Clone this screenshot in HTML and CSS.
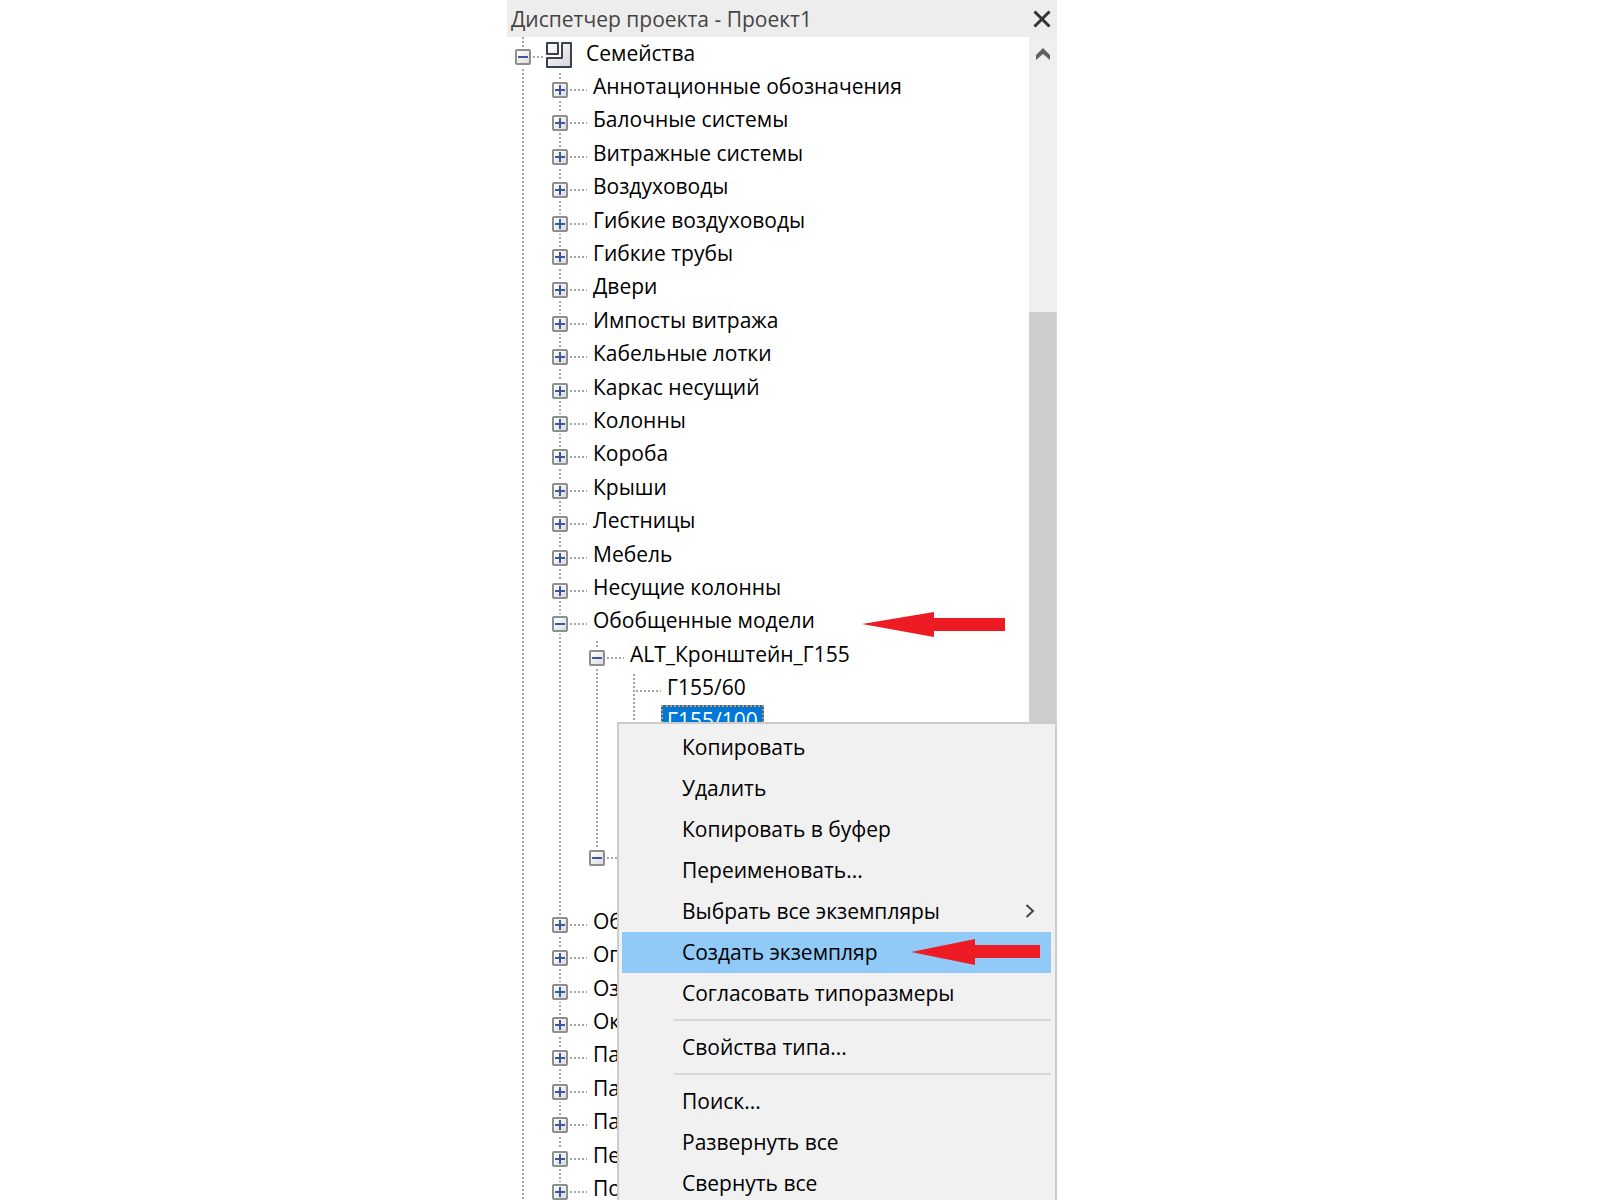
FILE: index.html
```
<!DOCTYPE html>
<html lang="ru">
<head>
    <meta charset="UTF-8">
    <meta name="viewport" content="width=device-width, initial-scale=1.0">
    <title>Диспетчер проекта - Проект1</title>
    <link rel="stylesheet" href="styles.css">
</head>
<body>
    <main class="browser">
        <header class="title-bar">
            <h1>Диспетчер проекта - Проект1</h1>
            <button class="close" type="button">
                <svg width="18" height="18" viewBox="0 0 18 18"><path d="M1.500 1.500 16.500 16.500M16.500 1.500 1.500 16.500" stroke="#333" stroke-width="3" fill="none"/></svg>
            </button>
        </header>

        <div class="content">
            <ul class="tree root">
                <li>
                    <div class="row">
                        <button class="toggle open" type="button"></button><span class="stub short"></span>
                        <svg class="families" width="26" height="26" viewBox="0 0 26 26">
                            <defs><linearGradient id="shade" x1="0" y1="0" x2="1" y2="1"><stop offset="0" stop-color="#fff"/><stop offset="1" stop-color="#d3d5da"/></linearGradient></defs>
                            <path d="M1 1H12V12H1ZM16 1H25V25H1V16H16Z" fill="url(#shade)" stroke="#3b4050" stroke-width="2" stroke-linejoin="round"/>
                        </svg>
                        <span class="label">Семейства</span>
                    </div>
                    <ul class="tree">
                        <li><div class="row"><button class="toggle" type="button"></button><span class="stub"></span><span class="label">Аннотационные обозначения</span></div></li>
                        <li><div class="row"><button class="toggle" type="button"></button><span class="stub"></span><span class="label">Балочные системы</span></div></li>
                        <li><div class="row"><button class="toggle" type="button"></button><span class="stub"></span><span class="label">Витражные системы</span></div></li>
                        <li><div class="row"><button class="toggle" type="button"></button><span class="stub"></span><span class="label">Воздуховоды</span></div></li>
                        <li><div class="row"><button class="toggle" type="button"></button><span class="stub"></span><span class="label">Гибкие воздуховоды</span></div></li>
                        <li><div class="row"><button class="toggle" type="button"></button><span class="stub"></span><span class="label">Гибкие трубы</span></div></li>
                        <li><div class="row"><button class="toggle" type="button"></button><span class="stub"></span><span class="label">Двери</span></div></li>
                        <li><div class="row"><button class="toggle" type="button"></button><span class="stub"></span><span class="label">Импосты витража</span></div></li>
                        <li><div class="row"><button class="toggle" type="button"></button><span class="stub"></span><span class="label">Кабельные лотки</span></div></li>
                        <li><div class="row"><button class="toggle" type="button"></button><span class="stub"></span><span class="label">Каркас несущий</span></div></li>
                        <li><div class="row"><button class="toggle" type="button"></button><span class="stub"></span><span class="label">Колонны</span></div></li>
                        <li><div class="row"><button class="toggle" type="button"></button><span class="stub"></span><span class="label">Короба</span></div></li>
                        <li><div class="row"><button class="toggle" type="button"></button><span class="stub"></span><span class="label">Крыши</span></div></li>
                        <li><div class="row"><button class="toggle" type="button"></button><span class="stub"></span><span class="label">Лестницы</span></div></li>
                        <li><div class="row"><button class="toggle" type="button"></button><span class="stub"></span><span class="label">Мебель</span></div></li>
                        <li><div class="row"><button class="toggle" type="button"></button><span class="stub"></span><span class="label">Несущие колонны</span></div></li>
                        <li>
                            <div class="row"><button class="toggle open" type="button"></button><span class="stub"></span><span class="label">Обобщенные модели</span></div>
                            <ul class="tree">
                                <li>
                                    <div class="row"><button class="toggle open" type="button"></button><span class="stub"></span><span class="label">ALT_Кронштейн_Г155</span></div>
                                    <ul class="tree">
                                        <li><div class="row leaf"><span class="stub"></span><span class="label">Г155/60</span></div></li>
                                        <li><div class="row leaf"><span class="stub"></span><span class="label selected">Г155/100</span></div></li>
                                        <li><div class="row leaf"></div></li>
                                        <li><div class="row leaf"></div></li>
                                        <li><div class="row leaf"></div></li>
                                    </ul>
                                </li>
                                <li>
                                    <div class="row"><button class="toggle open" type="button"></button><span class="stub"></span></div>
                                    <ul class="tree">
                                        <li><div class="row leaf"></div></li>
                                    </ul>
                                </li>
                            </ul>
                        </li>
                        <li><div class="row"><button class="toggle" type="button"></button><span class="stub"></span><span class="label">Об</span></div></li>
                        <li><div class="row"><button class="toggle" type="button"></button><span class="stub"></span><span class="label">Ог</span></div></li>
                        <li><div class="row"><button class="toggle" type="button"></button><span class="stub"></span><span class="label">Оз</span></div></li>
                        <li><div class="row"><button class="toggle" type="button"></button><span class="stub"></span><span class="label">Ок</span></div></li>
                        <li><div class="row"><button class="toggle" type="button"></button><span class="stub"></span><span class="label">Па</span></div></li>
                        <li><div class="row"><button class="toggle" type="button"></button><span class="stub"></span><span class="label">Па</span></div></li>
                        <li><div class="row"><button class="toggle" type="button"></button><span class="stub"></span><span class="label">Па</span></div></li>
                        <li><div class="row"><button class="toggle" type="button"></button><span class="stub"></span><span class="label">Пе</span></div></li>
                        <li><div class="row"><button class="toggle" type="button"></button><span class="stub"></span><span class="label">По</span></div></li>
                    </ul>
                </li>
            </ul>

            <div class="scrollbar">
                <button class="scroll-up" type="button">
                    <svg width="14" height="12" viewBox="0 0 14 12"><path d="M0 7 7 0 14 7V12L7 6 0 12Z" fill="#606060"/></svg>
                </button>
                <div class="thumb"></div>
            </div>
        </div>

        <svg class="arrow arrow-tree" width="143" height="26" viewBox="0 0 143 26"><path d="M0 12 72 0V6H143V19H72V25Z" fill="#ed1c24"/></svg>

        <!-- Context menu of the selected type -->
        <div class="menu">
            <button type="button">Копировать</button>
            <button type="button">Удалить</button>
            <button type="button">Копировать в буфер</button>
            <button type="button">Переименовать...</button>
            <button type="button">Выбрать все экземпляры
                <svg class="submenu" width="10" height="14" viewBox="0 0 10 14"><path d="M1.500 1 8 7 1.500 13" stroke="#444" stroke-width="2" fill="none"/></svg>
            </button>
            <button class="active" type="button">Создать экземпляр
                <svg class="arrow arrow-menu" width="130" height="26" viewBox="0 0 130 26"><path d="M0 13 64 0V6H129V19H64V26Z" fill="#ed1c24"/></svg>
            </button>
            <button type="button">Согласовать типоразмеры</button>
            <hr>
            <button type="button">Свойства типа...</button>
            <hr>
            <button type="button">Поиск...</button>
            <button type="button">Развернуть все</button>
            <button type="button">Свернуть все</button>
        </div>
    </main>
</body>
</html>
```
FILE: styles.css
```
* {
    box-sizing: border-box;
}

body {
    margin: 0;
    height: 100vh;
    overflow: hidden;
    display: grid;
    grid-template-columns: 507fr 550fr 543fr;
    background-color: #fff;
    color: #000;
    font-family: "Open Sans", "Noto Sans", sans-serif;
    font-size: 21px;
    line-height: 30px;
}

button {
    padding: 0;
    border: none;
    background: none;
    color: inherit;
    font: inherit;
}

svg {
    display: block;
    flex-shrink: 0;
}

.browser {
    grid-column: 2;
    position: relative;
    display: flex;
    flex-direction: column;
    height: 100vh;
    overflow: hidden;
}

.title-bar {
    display: flex;
    flex-shrink: 0;
    align-items: center;
    justify-content: space-between;
    height: 37px;
    padding: 1px 6px 0 4px;
    background-color: #ededed;
}

.title-bar h1 {
    margin: 0;
    color: #444;
    font-size: 21px;
    font-weight: normal;
}

.content {
    display: flex;
    flex: 1;
    min-height: 0;
}

/* Tree: every list draws its own dotted guide line */
.tree {
    margin: 0 0 0 37px;
    padding: 0;
    list-style: none;
    background: repeating-linear-gradient(#a6a6a6 0 2px, #fff 2px 4px) 15px 0 / 2px 100% no-repeat;
}

.tree.root {
    flex: 1;
    min-width: 0;
    margin: 0;
    padding-top: 3px;
}

/* the guide stops at the last item */
.tree .tree > li:last-child {
    background: linear-gradient(#fff, #fff) 0 17px no-repeat;
}

.row {
    display: flex;
    align-items: center;
    height: 33px;
    padding-left: 8px;
    white-space: nowrap;
}

li:nth-child(5n+2) > .row,
li:nth-child(5n+4) > .row {
    height: 34px;
}

.toggle {
    flex-shrink: 0;
    width: 16px;
    height: 16px;
    border: 2px solid #8e8e8e;
    border-radius: 2px;
    box-shadow: 0 0 0 2px #fff;
    background:
        linear-gradient(#3c57a0, #3c57a0) center / 10px 2px no-repeat,
        linear-gradient(#3c57a0, #3c57a0) center / 2px 10px no-repeat,
        linear-gradient(135deg, #fff, #dcdcdc);
}

.toggle.open {
    background:
        linear-gradient(#3c57a0, #3c57a0) center / 10px 2px no-repeat,
        linear-gradient(135deg, #fff, #dcdcdc);
}

.stub {
    flex-shrink: 0;
    width: 17px;
    height: 2px;
    margin-left: 2px;
    background: repeating-linear-gradient(90deg, #a6a6a6 0 2px, #fff 2px 4px);
}

.stub.short {
    width: 10px;
}

.families {
    margin: 0 8px 4px 3px;
}

.label {
    margin-bottom: 8px;
    padding: 0 6px;
}

.leaf .stub {
    width: 25px;
    margin-left: 10px;
}

.label.selected {
    background-color: #0078d7;
    color: #fff;
    outline: 2px dotted #e88a3c;
    outline-offset: -2px;
}

.scrollbar {
    display: flex;
    flex-direction: column;
    width: 28px;
    background-color: #efefef;
}

.scroll-up {
    display: flex;
    justify-content: center;
    height: 275px;
    padding-top: 11px;
}

.thumb {
    flex: 1;
    border-right: 1px solid #dadada;
    background-color: #cdcdcd;
}

.menu {
    position: absolute;
    top: 722px;
    left: 110px;
    right: 0;
    padding: 3px 4px 2px 3px;
    border: 2px solid #ccc;
    background-color: #f1f1f1;
}

.menu button {
    position: relative;
    display: flex;
    align-items: center;
    justify-content: space-between;
    width: 100%;
    height: 41px;
    padding: 0 16px 2px 60px;
    text-align: left;
}

.menu .active {
    background-color: #91c9f7;
}

.menu hr {
    height: 2px;
    margin: 5px 0 6px 52px;
    border: none;
    background-color: #d8d8d8;
}

.arrow {
    position: absolute;
}

.arrow-tree {
    top: 612px;
    right: 52px;
}

.arrow-menu {
    top: 7px;
    right: 10px;
}
```
